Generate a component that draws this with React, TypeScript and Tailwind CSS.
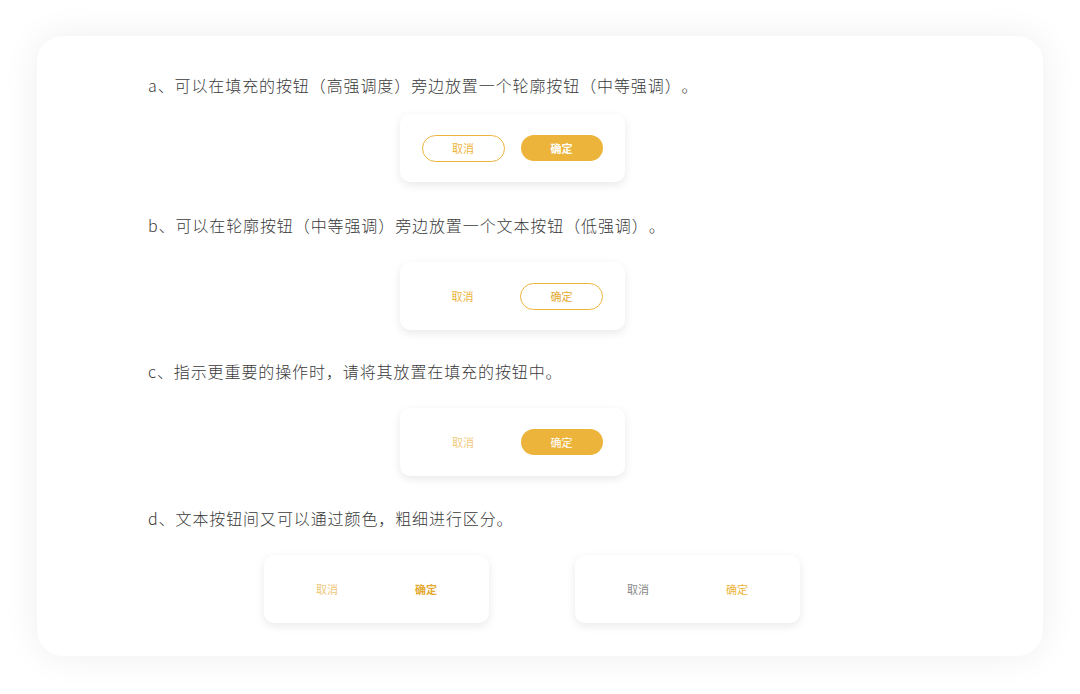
const FONT = { fontFamily: '"Noto Sans CJK SC", "Noto Sans", sans-serif' };

function Panel({ children }: { children: React.ReactNode }) {
  return (
    <div className="w-[225px] h-[68px] bg-white rounded-[10px] shadow-[0_3px_10px_rgba(0,0,0,0.09)] flex items-center justify-center gap-4">
      {children}
    </div>
  );
}

function Caption({ children }: { children: React.ReactNode }) {
  return (
    <p className="text-[16px] leading-[24px] tracking-[0.9px] text-[#3a3a3a] font-light [text-spacing-trim:space-all]" style={FONT}>
      {children}
    </p>
  );
}

export default function App() {
  return (
    <div className="w-[1080px] h-[694px] bg-white flex items-start justify-center pt-[36px]" style={FONT}>
      <div className="w-[1006px] h-[620px] bg-white rounded-[26px] shadow-[0_0_36px_rgba(0,0,0,0.07)] pl-[111px] pt-[37px]">
        <div className="w-[728px] flex flex-col">
          <Caption>a、可以在填充的按钮（高强调度）旁边放置一个轮廓按钮（中等强调）。</Caption>
          <div className="flex justify-center mt-[17px]">
            <Panel>
              <button className="w-[83px] h-[27px] rounded-full border border-[#EDB43C] text-[#EDB43C] text-[11px]">取消</button>
              <button className="w-[82px] h-[26px] rounded-full bg-[#EDB43C] text-white text-[11px] font-bold">确定</button>
            </Panel>
          </div>

          <div className="mt-[31px]">
            <Caption>b、可以在轮廓按钮（中等强调）旁边放置一个文本按钮（低强调）。</Caption>
          </div>
          <div className="flex justify-center mt-[25px]">
            <Panel>
              <button className="w-[83px] h-[27px] text-[#EDB43C] text-[11px]">取消</button>
              <button className="w-[83px] h-[27px] rounded-full border border-[#EDB43C] text-[#E3A933] text-[11px]">确定</button>
            </Panel>
          </div>

          <div className="mt-[29px]">
            <Caption>c、指示更重要的操作时，请将其放置在填充的按钮中。</Caption>
          </div>
          <div className="flex justify-center mt-[25px]">
            <Panel>
              <button className="w-[83px] h-[27px] text-[#EFCB80] text-[11px]">取消</button>
              <button className="w-[82px] h-[26px] rounded-full bg-[#EDB43C] text-white text-[11px]">确定</button>
            </Panel>
          </div>

          <div className="mt-[30px]">
            <Caption>d、文本按钮间又可以通过颜色，粗细进行区分。</Caption>
          </div>
          <div className="flex mt-[25px] ml-[116px] gap-[86px]">
            <Panel>
              <button className="w-[83px] h-[27px] text-[#EFC678] text-[11px]">取消</button>
              <button className="w-[83px] h-[27px] text-[#E3A933] text-[11px] font-bold">确定</button>
            </Panel>
            <Panel>
              <button className="w-[83px] h-[27px] text-[#888] text-[11px]">取消</button>
              <button className="w-[83px] h-[27px] text-[#EDB43C] text-[11px]">确定</button>
            </Panel>
          </div>
        </div>
      </div>
    </div>
  );
}
